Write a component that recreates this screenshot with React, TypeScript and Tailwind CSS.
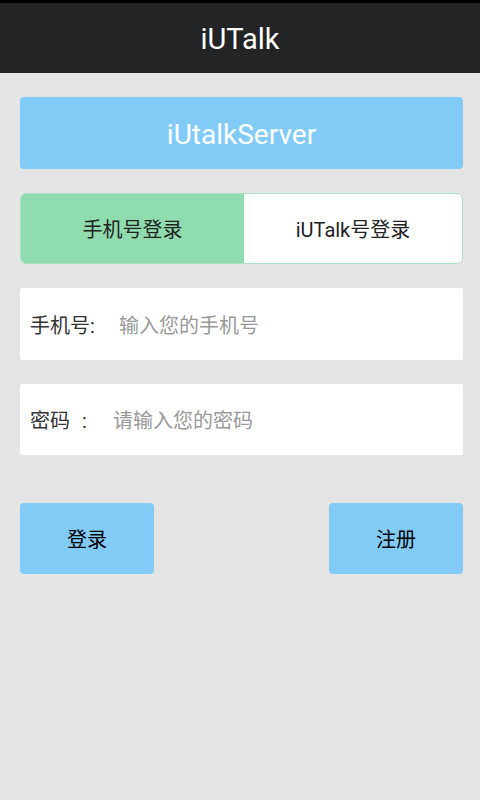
export default function App() {
  return (
    <div
      className="w-[480px] h-[800px] bg-[#e5e5e5] flex flex-col"
      style={{ fontFamily: 'Roboto, "Noto Sans CJK SC", sans-serif' }}
    >
      {/* Title bar */}
      <div className="h-[73px] bg-[#232426] border-t-[3px] border-black flex items-center justify-center pt-[2px]">
        <span className="text-white text-[29px] leading-none">iUTalk</span>
      </div>

      <div className="flex flex-col px-[20px] pt-[24px] pr-[17px]">
        {/* Server button */}
        <div className="h-[72px] rounded-[4px] bg-[#82cbf6] flex items-center justify-center pt-[4px]">
          <span className="text-white text-[28px] leading-none">iUtalkServer</span>
        </div>

        {/* Tabs */}
        <div className="mt-[24px] h-[71px] rounded-[6px] border border-[#a8e2c0] flex overflow-hidden">
          <div className="w-[223px] bg-[#8fdcae] flex items-center justify-center pt-[3px]">
            <span className="text-[#222] text-[20px] leading-none">手机号登录</span>
          </div>
          <div className="flex-1 bg-white flex items-center justify-center pt-[3px]">
            <span className="text-[#222] text-[20px] leading-none">iUTalk号登录</span>
          </div>
        </div>

        {/* Phone input */}
        <div className="mt-[24px] h-[72px] rounded-[3px] bg-white flex items-center pl-[10px] pt-[3px]">
          <span className="text-[#333] text-[20px] leading-none w-[89px]">手机号:</span>
          <span className="text-[#999] text-[20px] leading-none">输入您的手机号</span>
        </div>

        {/* Password input */}
        <div className="mt-[24px] h-[71px] rounded-[3px] bg-white flex items-center pl-[10px] pt-[3px]">
          <span className="text-[#333] text-[20px] leading-none w-[83px] flex">
            <span>密码</span>
            <span className="ml-[12px]">:</span>
          </span>
          <span className="text-[#999] text-[20px] leading-none">请输入您的密码</span>
        </div>

        {/* Buttons */}
        <div className="mt-[48px] flex justify-between">
          <div className="w-[134px] h-[71px] rounded-[4px] bg-[#82cbf6] flex items-center justify-center pt-[3px]">
            <span className="text-black text-[20px] leading-none">登录</span>
          </div>
          <div className="w-[134px] h-[71px] rounded-[4px] bg-[#82cbf6] flex items-center justify-center pt-[3px]">
            <span className="text-black text-[20px] leading-none">注册</span>
          </div>
        </div>
      </div>
    </div>
  );
}
